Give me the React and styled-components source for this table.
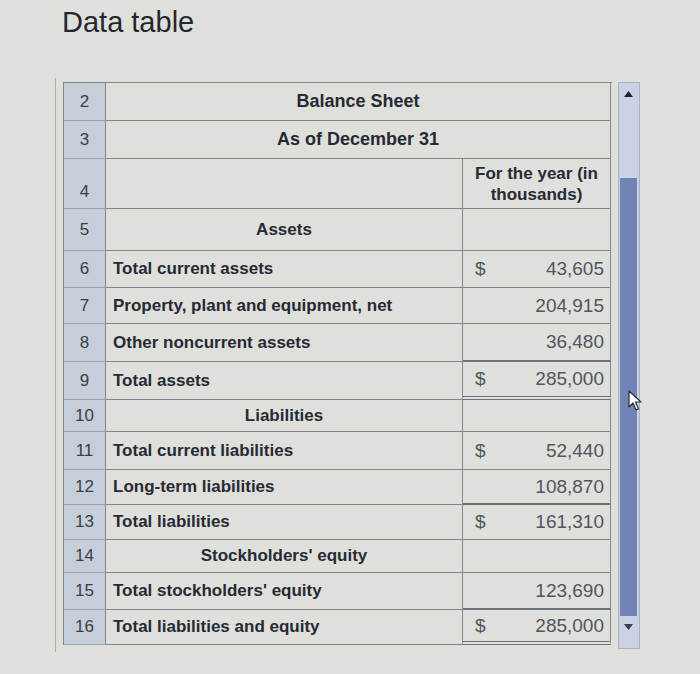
import styled, { createGlobalStyle } from "styled-components";

const GlobalStyle = createGlobalStyle`
  html, body {
    margin: 0;
    padding: 0;
    background: #dfe0dc;
  }
  body {
    font-family: "Liberation Sans", Arial, sans-serif;
    color: #262a33;
  }
`;

const Page = styled.div`
  width: 700px;
  height: 674px;
  overflow: hidden;
  position: relative;
  background: #dfe0dc;
`;

const Title = styled.h1`
  margin: 0;
  padding: 6px 0 0 62px;
  height: 78px;
  box-sizing: border-box;
  font-size: 29px;
  font-weight: 400;
  color: #24272e;
`;

const Frame = styled.div`
  display: flex;
  margin-left: 55px;
  padding: 4px 0 0 7px;
  border-left: 1px solid #a9adb3;
  height: 574px;
  box-sizing: border-box;
`;

const Table = styled.div`
  display: flex;
  flex-direction: column;
  width: 548px;
  border-top: 1px solid #80858e;
  border-left: 1px solid #80858e;
  align-self: flex-start;
`;

const Row = styled.div`
  display: grid;
  grid-template-columns: 42px 357px 148px;
  height: ${p => p.h}px;
`;

const Num = styled.div`
  background: #c6ced9;
  border-right: 1px solid #80858e;
  border-bottom: 1px solid #9aa2ae;
  display: flex;
  justify-content: center;
  align-items: ${p => (p.bottom ? "flex-end" : "center")};
  padding-bottom: ${p => (p.bottom ? "6px" : "0")};
  font-size: 17px;
  color: #3a3e46;
`;

const Label = styled.div`
  grid-column: ${p => (p.span ? "span 2" : "auto")};
  border-right: 1px solid #80858e;
  border-bottom: 1px solid #80858e;
  display: flex;
  align-items: center;
  justify-content: ${p => (p.center ? "center" : "flex-start")};
  padding-left: ${p => (p.center ? "0" : "7px")};
  font-size: ${p => (p.big ? "18px" : "17px")};
  font-weight: 700;
  white-space: nowrap;
`;

const Value = styled.div`
  border-right: 1px solid #80858e;
  border-bottom: ${p =>
    p.line === "double"
      ? "4px double #6c717b"
      : p.line === "thick"
      ? "2px solid #6c717b"
      : "1px solid #80858e"};
  display: flex;
  align-items: center;
  justify-content: space-between;
  padding: 0 6px 0 12px;
  font-size: 19px;
  color: #51555e;
`;

const Header = styled(Value)`
  justify-content: center;
  text-align: center;
  padding: 0 4px;
  font-size: 17px;
  font-weight: 700;
  line-height: 21px;
  color: #262a33;
`;

const Amount = styled.span`
  margin-left: auto;
`;

const ScrollCol = styled.div`
  width: 33px;
  height: 567px;
  padding: 0 5px 0 5px;
  box-sizing: border-box;
  display: flex;
  flex-direction: column;
  align-items: center;
  position: relative;
`;

const Track = styled.div`
  width: 22px;
  flex: 1;
  background: #c9d3e5;
  border: 1px solid #aab2c2;
  display: flex;
  flex-direction: column;
  align-items: center;
  padding: 0 2px;
  box-sizing: border-box;
`;

const Arrow = styled.div`
  height: 22px;
  display: flex;
  align-items: center;
  justify-content: center;
`;

const Thumb = styled.div`
  width: 17px;
  margin-top: ${p => p.top}px;
  height: 438px;
  background: #7283b6;
`;

const Cursor = styled.svg`
  position: absolute;
  left: 16px;
  top: 308px;
`;

const rows = [
  { n: 2, h: 38, title: "Balance Sheet", big: true },
  { n: 3, h: 38, title: "As of December 31", big: true },
  { n: 4, h: 50, header: true },
  { n: 5, h: 42, section: "Assets" },
  { n: 6, h: 37, label: "Total current assets", dollar: true, amount: "43,605" },
  { n: 7, h: 36, label: "Property, plant and equipment, net", amount: "204,915" },
  { n: 8, h: 38, label: "Other noncurrent assets", amount: "36,480", line: "thick" },
  { n: 9, h: 38, label: "Total assets", dollar: true, amount: "285,000", line: "double" },
  { n: 10, h: 32, section: "Liabilities" },
  { n: 11, h: 38, label: "Total current liabilities", dollar: true, amount: "52,440" },
  { n: 12, h: 35, label: "Long-term liabilities", amount: "108,870", line: "thick" },
  { n: 13, h: 35, label: "Total liabilities", dollar: true, amount: "161,310" },
  { n: 14, h: 33, section: "Stockholders' equity" },
  { n: 15, h: 37, label: "Total stockholders' equity", amount: "123,690", line: "thick" },
  { n: 16, h: 35, label: "Total liabilities and equity", dollar: true, amount: "285,000", line: "double" }
];

const App = () => {
  return (
    <Page>
      <GlobalStyle />
      <Title>Data table</Title>
      <Frame>
        <Table>
          {rows.map(r => (
            <Row key={r.n} h={r.h}>
              <Num bottom={r.header}>{r.n}</Num>
              {r.title ? (
                <Label span center big>
                  {r.title}
                </Label>
              ) : r.header ? (
                <>
                  <Label />
                  <Header>
                    For the year (in
                    <br />
                    thousands)
                  </Header>
                </>
              ) : r.section ? (
                <>
                  <Label center>{r.section}</Label>
                  <Value />
                </>
              ) : (
                <>
                  <Label>{r.label}</Label>
                  <Value line={r.line}>
                    {r.dollar && <span>$</span>}
                    <Amount>{r.amount}</Amount>
                  </Value>
                </>
              )}
            </Row>
          ))}
        </Table>
        <ScrollCol>
          <Track>
            <Arrow>
              <svg width="9" height="6" viewBox="0 0 9 6">
                <path d="M0 6 L4.5 0 L9 6 Z" fill="#1c1f26" />
              </svg>
            </Arrow>
            <Thumb top={73} />
            <Arrow>
              <svg width="9" height="6" viewBox="0 0 9 6">
                <path d="M0 0 L4.5 6 L9 0 Z" fill="#3a3f4a" />
              </svg>
            </Arrow>
          </Track>
          <Cursor width="14" height="22" viewBox="0 0 14 22">
            <path
              d="M1 1 L1 17 L5 13 L8 20 L10.5 19 L7.5 12 L13 12 Z"
              fill="#ffffff"
              stroke="#2a2d33"
              strokeWidth="1.2"
              strokeLinejoin="round"
            />
          </Cursor>
        </ScrollCol>
      </Frame>
    </Page>
  );
};

export default App;
